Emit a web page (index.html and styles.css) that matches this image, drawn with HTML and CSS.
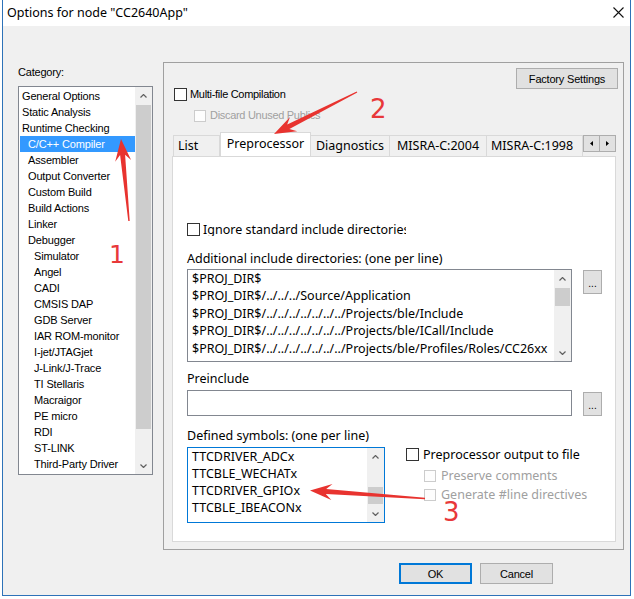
FILE: index.html
```html
<!DOCTYPE html>
<html>
<head>
<meta charset="utf-8">
<link rel="stylesheet" href="styles.css">
</head>
<body>
<div class="window">
  <div class="titlebar">
    <span class="title">Options for node "CC2640App"</span>
    <svg class="close" width="11" height="11" viewBox="0 0 11 11"><path d="M0.5 0.5 L10.5 10.5 M10.5 0.5 L0.5 10.5" stroke="#111" stroke-width="1.1" fill="none"/></svg>
  </div>
  <div class="client">
    <div class="main">
      <div class="left">
        <div class="cat-label">Category:</div>
        <div class="listbox">
          <div class="items">
            <div class="item l0">General Options</div>
            <div class="item l0">Static Analysis</div>
            <div class="item l0">Runtime Checking</div>
            <div class="item l1 sel">C/C++ Compiler</div>
            <div class="item l1">Assembler</div>
            <div class="item l1">Output Converter</div>
            <div class="item l1">Custom Build</div>
            <div class="item l1">Build Actions</div>
            <div class="item l1">Linker</div>
            <div class="item l1">Debugger</div>
            <div class="item l2">Simulator</div>
            <div class="item l2">Angel</div>
            <div class="item l2">CADI</div>
            <div class="item l2">CMSIS DAP</div>
            <div class="item l2">GDB Server</div>
            <div class="item l2">IAR ROM-monitor</div>
            <div class="item l2">I-jet/JTAGjet</div>
            <div class="item l2">J-Link/J-Trace</div>
            <div class="item l2">TI Stellaris</div>
            <div class="item l2">Macraigor</div>
            <div class="item l2">PE micro</div>
            <div class="item l2">RDI</div>
            <div class="item l2">ST-LINK</div>
            <div class="item l2">Third-Party Driver</div>
          </div>
          <div class="vscroll">
            <div class="sarrow"><svg width="7" height="4" viewBox="0 0 7 4"><path d="M0.5 3.5 L3.5 0.5 L6.5 3.5" fill="none" stroke="#606060" stroke-width="1.2"/></svg></div>
            <div class="track"><div class="thumb list-thumb"></div></div>
            <div class="sarrow"><svg width="7" height="4" viewBox="0 0 7 4"><path d="M0.5 0.5 L3.5 3.5 L6.5 0.5" fill="none" stroke="#606060" stroke-width="1.2"/></svg></div>
          </div>
        </div>
      </div>

      <div class="panel">
        <div class="factory-row"><div class="btn factory">Factory Settings</div></div>
        <div class="chk-row multi">
          <span class="cb"></span><span class="ms lbl">Multi-file Compilation</span>
        </div>
        <div class="chk-row discard">
          <span class="cb dis"></span><span class="ms lbl disabled">Discard Unused Publics</span>
        </div>

        <div class="tabs">
          <div class="tabstrip">
            <div class="tablist">
              <div class="tab t-list">List</div>
              <div class="tab t-pre active">Preprocessor</div>
              <div class="tab t-diag">Diagnostics</div>
              <div class="tab t-m04">MISRA-C:2004</div>
              <div class="tab t-m98">MISRA-C:1998</div>
            </div>
            <div class="tabscroll">
              <div class="tsb"><svg width="3" height="5" viewBox="0 0 3 5"><path d="M3 0 L0 2.5 L3 5 Z" fill="#000"/></svg></div>
              <div class="tsb"><svg width="3" height="5" viewBox="0 0 3 5"><path d="M0 0 L3 2.5 L0 5 Z" fill="#000"/></svg></div>
            </div>
          </div>
          <div class="tabpage">
            <div class="chk-row ignore">
              <span class="cb"></span><span class="yh lbl clip">Ignore standard include directories</span>
            </div>
            <div class="yh label add-label">Additional include directories: (one per line)</div>
            <div class="field-row">
              <div class="textbox incbox">
                <div class="lines yh inc-lines">
                  <div>$PROJ_DIR$</div>
                  <div>$PROJ_DIR$/../../../Source/Application</div>
                  <div>$PROJ_DIR$/../../../../../../../Projects/ble/Include</div>
                  <div>$PROJ_DIR$/../../../../../../../Projects/ble/ICall/Include</div>
                  <div>$PROJ_DIR$/../../../../../../../Projects/ble/Profiles/Roles/CC26xx</div>
                </div>
                <div class="vscroll">
                  <div class="sarrow"><svg width="7" height="4" viewBox="0 0 7 4"><path d="M0.5 3.5 L3.5 0.5 L6.5 3.5" fill="none" stroke="#606060" stroke-width="1.2"/></svg></div>
                  <div class="track"><div class="thumb inc-thumb"></div></div>
                  <div class="sarrow"><svg width="7" height="4" viewBox="0 0 7 4"><path d="M0.5 0.5 L3.5 3.5 L6.5 0.5" fill="none" stroke="#606060" stroke-width="1.2"/></svg></div>
                </div>
              </div>
              <div class="btn dots inc-dots">...</div>
            </div>
            <div class="yh label pre-label">Preinclude</div>
            <div class="field-row">
              <div class="textbox prebox"></div>
              <div class="btn dots pre-dots">...</div>
            </div>
            <div class="yh label def-label">Defined symbols: (one per line)</div>
            <div class="def-row">
              <div class="textbox defbox">
                <div class="lines yh def-lines">
                  <div>TTCDRIVER_ADCx</div>
                  <div>TTCBLE_WECHATx</div>
                  <div>TTCDRIVER_GPIOx</div>
                  <div>TTCBLE_IBEACONx</div>
                </div>
                <div class="vscroll">
                  <div class="sarrow"><svg width="7" height="4" viewBox="0 0 7 4"><path d="M0.5 3.5 L3.5 0.5 L6.5 3.5" fill="none" stroke="#606060" stroke-width="1.2"/></svg></div>
                  <div class="track"><div class="thumb def-thumb"></div></div>
                  <div class="sarrow"><svg width="7" height="4" viewBox="0 0 7 4"><path d="M0.5 0.5 L3.5 3.5 L6.5 0.5" fill="none" stroke="#606060" stroke-width="1.2"/></svg></div>
                </div>
              </div>
              <div class="pp-opts">
                <div class="chk-row pp-out">
                  <span class="cb"></span><span class="yh lbl">Preprocessor output to file</span>
                </div>
                <div class="chk-row pp-sub first">
                  <span class="cb dis"></span><span class="yh lbl disabled">Preserve comments</span>
                </div>
                <div class="chk-row pp-sub second">
                  <span class="cb dis"></span><span class="yh lbl disabled">Generate #line directives</span>
                </div>
              </div>
            </div>
          </div>
        </div>
      </div>
    </div>
    <div class="buttons">
      <div class="btn dlg ok">OK</div>
      <div class="btn dlg">Cancel</div>
    </div>
  </div>
</div>

<svg class="annot" width="634" height="599" viewBox="0 0 634 599">
  <polygon fill="#e8332f" points="121,139 131.1,160.1 125.1,154.7 129.7,220.9 128.3,221.1 120.1,155.1 115.2,161.7"/>
  <polygon fill="#e8332f" points="274,134 290.0,116.9 287.2,124.6 356.7,91.4 357.3,92.6 289.4,129.0 297.2,131.2"/>
  <polygon fill="#e8332f" points="310,490.5 332.5,484.0 326.2,489.1 425,497.8 425,499.2 325.8,494.1 331.3,500.0"/>
</svg>
<div class="num n1">1</div>
<div class="num n2">2</div>
<div class="num n3">3</div>
</body>
</html>
```
FILE: styles.css
```css
* { box-sizing: border-box; }
html, body { margin: 0; padding: 0; }
body {
  width: 634px;
  height: 599px;
  background: #ffffff;
  position: relative;
  overflow: hidden;
  font-family: "Liberation Sans", Arial, sans-serif;
  font-size: 11px;
  color: #000;
}
.window {
  margin-left: 2px;
  width: 629px;
  height: 596px;
  border-left: 1px solid #2d72b8;
  border-right: 1px solid #2d72b8;
  border-bottom: 1px solid #2d72b8;
  background: #f0f0f0;
  display: flex;
  flex-direction: column;
}
.titlebar {
  height: 26px;
  background: #ffffff;
  display: flex;
  align-items: center;
  justify-content: space-between;
  padding-left: 4px;
  padding-right: 6px;
}
.title {
  font-family: "Noto Sans", sans-serif;
  font-size: 12.5px;
  line-height: 16px;
  margin-top: -1px;
}
.close { display: block; margin-top: -2px; }

.client { flex: 1; display: flex; flex-direction: column; }
.main { display: flex; padding-left: 15px; }

.ms { font-family: "Liberation Sans", Arial, sans-serif; font-size: 11px; letter-spacing: -0.3px; }
.yh { font-family: "Noto Sans", sans-serif; font-size: 12.5px; }

/* left */
.left { width: 135px; }
.cat-label {
  margin-top: 38px;
  line-height: 16px;
  height: 16px;
  letter-spacing: -0.2px;
}
.listbox {
  margin-top: 6px;
  width: 135px;
  height: 389px;
  border: 1px solid #828790;
  background: #fff;
  display: flex;
}
.items { flex: 1; padding-top: 1px; overflow: hidden; }
.item {
  height: 16px;
  line-height: 16px;
  margin-left: 1px;
  white-space: nowrap;
  letter-spacing: -0.15px;
}
.item.l0 { padding-left: 2px; }
.item.l1 { padding-left: 8px; }
.item.l2 { padding-left: 14px; }
.item.sel { background: #3399ff; color: #fff; }

.vscroll {
  width: 17px;
  background: #f0f0f0;
  display: flex;
  flex-direction: column;
}
.sarrow {
  height: 17px;
  display: flex;
  align-items: center;
  justify-content: center;
}
.sarrow svg { display: block; }
.track { flex: 1; padding: 0 1px; }
.thumb { background: #cdcdcd; }
.list-thumb { margin-top: 1px; height: 324px; }

/* panel */
.panel {
  margin-left: 10px;
  margin-top: 36px;
  width: 461px;
  height: 488px;
  border: 1px solid #a0a0a0;
}
.factory-row {
  display: flex;
  justify-content: flex-end;
  padding-top: 5px;
  padding-right: 5px;
}
.btn {
  background: #e1e1e1;
  border: 1px solid #adadad;
  display: flex;
  align-items: center;
  justify-content: center;
  font-family: "Liberation Sans", Arial, sans-serif;
  font-size: 11px;
  letter-spacing: -0.2px;
}
.factory { width: 102px; height: 21px; }

.chk-row { display: flex; align-items: center; }
.cb {
  width: 13px;
  height: 13px;
  border: 1px solid #333;
  background: #fff;
  flex: none;
}
.cb.dis { width: 12px; height: 12px; border-color: #cccccc; background: #fdfdfd; }
.lbl { white-space: nowrap; line-height: 13px; }
.disabled { color: #a0a0a0; }

.multi { margin-top: -1px; padding-left: 10px; }
.multi .lbl { margin-left: 3px; }
.discard { margin-top: 8px; padding-left: 30px; }
.discard .lbl { margin-left: 4px; }

/* tabs */
.tabs { margin-top: 10px; margin-left: 8px; width: 444px; }
.tabstrip { display: flex; height: 24px; }
.tablist {
  flex: 1;
  display: flex;
  align-items: flex-end;
  padding-left: 1px;
  overflow: hidden;
  position: relative;
  z-index: 2;
}
.tab {
  flex: none;
  height: 21px;
  border-top: 1px solid #d9d9d9;
  border-right: 1px solid #d9d9d9;
  background: #f0f0f0;
  font-family: "Noto Sans", sans-serif;
  font-size: 12.5px;
  line-height: 20px;
  text-align: center;
  white-space: nowrap;
}
.t-list { width: 47px; border-left: 1px solid #d9d9d9; text-align: left; padding-left: 4px; }
.t-pre { width: 91px; }
.t-diag { width: 79px; }
.t-m04 { width: 97px; }
.t-m98 { width: 96px; padding-left: 4px; text-align: left; }
.tab.active {
  height: 25px;
  margin-bottom: -1px;
  background: #fff;
  border-left: 1px solid #d9d9d9;
  line-height: 22px;
}
.tabscroll { display: flex; padding-top: 3px; position: relative; z-index: 3; }
.tsb {
  width: 17px;
  height: 17px;
  background: #e1e1e1;
  border: 1px solid #adadad;
  display: flex;
  align-items: center;
  justify-content: center;
}
.tsb + .tsb { margin-left: -1px; }
.tsb svg { display: block; }

.tabpage {
  height: 386px;
  background: #fff;
  border: 1px solid #d9d9d9;
  padding-left: 14px;
}
.ignore { margin-top: 66px; }
.ignore .lbl { margin-left: 3px; }
.clip { width: 203px; overflow: hidden; }

.label { line-height: 16px; height: 16px; white-space: nowrap; }
.add-label { margin-top: 15px; }
.pre-label { margin-top: 9px; }
.def-label { margin-top: 12px; }

.field-row { display: flex; align-items: flex-start; }
.textbox { background: #fff; border: 1px solid #828790; }
.incbox {
  margin-top: 2px;
  width: 385px;
  height: 93px;
  display: flex;
}
.lines { flex: 1; overflow: hidden; white-space: nowrap; padding-left: 4px; }
.inc-lines { line-height: 17.4px; }
.inc-thumb { margin-top: 1px; height: 18px; }
.dots {
  width: 19px;
  height: 24px;
  margin-left: 11px;
  font-size: 10px;
  letter-spacing: 0;
  padding-top: 3px;
}
.inc-dots { margin-top: 3px; }
.prebox { margin-top: 3px; width: 385px; height: 26px; }
.pre-dots { margin-top: 5px; }

.def-row { display: flex; align-items: flex-start; }
.defbox {
  margin-top: 3px;
  width: 198px;
  height: 76px;
  border-color: #0078d7;
  display: flex;
}
.def-lines { line-height: 16.9px; padding-top: 1px; }
.def-thumb { margin-top: 22px; height: 17px; }

.pp-opts { margin-left: 21px; margin-top: 4px; }
.pp-out .lbl { margin-left: 4px; }
.pp-sub { padding-left: 18px; }
.pp-sub .lbl { margin-left: 5px; }
.pp-sub.first { margin-top: 8px; }
.pp-sub.second { margin-top: 6px; }

/* bottom buttons */
.buttons {
  display: flex;
  justify-content: flex-end;
  gap: 8px;
  margin-top: 13px;
  padding-right: 77px;
}
.dlg { width: 73px; height: 21px; font-size: 11px; }
.ok { border: 2px solid #0078d7; }

/* annotations */
.annot { position: absolute; left: 0; top: 0; pointer-events: none; z-index: 10; }
.num {
  position: absolute;
  z-index: 11;
  font-family: "DejaVu Sans", sans-serif;
  font-size: 25px;
  line-height: 25px;
  color: #e8383a;
}
.n1 { left: 109px; top: 242px; }
.n2 { left: 370px; top: 97px; font-size: 26px; }
.n3 { left: 443px; top: 500px; font-size: 26px; }
```
